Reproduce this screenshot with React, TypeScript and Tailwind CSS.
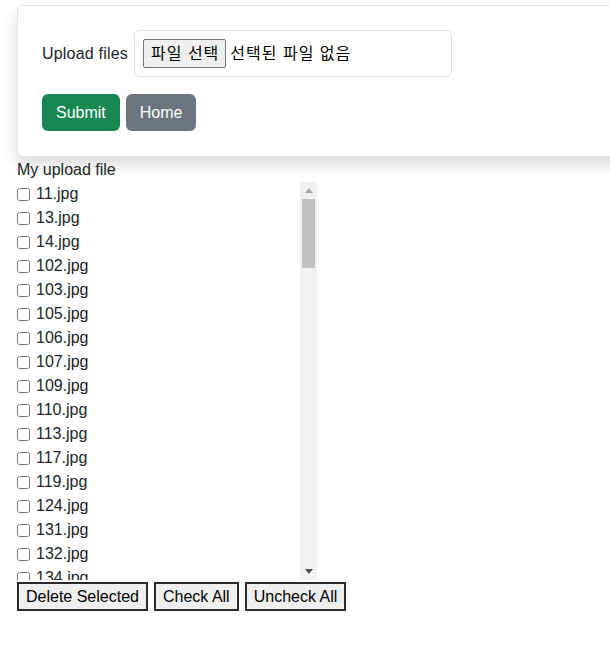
const files = [
  11, 13, 14, 102, 103, 105, 106, 107, 109, 110, 113, 117, 119, 124, 131, 132, 134,
  135, 138, 141, 142, 145, 147, 150, 152, 153, 156, 158, 161, 163, 166, 168, 170,
  171, 174, 176, 179, 181, 183, 186, 188, 190, 192, 195, 197, 199, 201, 204, 206,
].map((n) => `${n}.jpg`);

export default function App() {
  return (
    <div
      className="min-h-screen overflow-hidden bg-white px-[17px] pt-[5px] text-[16px] leading-6 text-[#212529]"
      style={{ fontFamily: '"Liberation Sans", "Noto Sans CJK KR", sans-serif' }}
    >
      <div className="w-[640px] rounded-md border border-[#e5e5e5] bg-white px-6 pt-6 pb-[25px] shadow-[0_8px_16px_rgba(0,0,0,0.15)]">
        <div className="flex items-center gap-[6px]">
          <label className="tracking-[0.2px]">Upload files</label>
          <div className="flex h-[47px] w-[318px] items-center rounded-md border border-[#dee2e6] px-[8px]">
            <span className="rounded-[2px] border border-[#767676] bg-[#efefef] pl-[7px] pr-[6px] leading-[27px] tracking-[1px] text-black">
              파일 선택
            </span>
            <span className="ml-[4px] tracking-[1px] text-black">선택된 파일 없음</span>
          </div>
        </div>
        <div className="mt-[17px] flex gap-[6px]">
          <button className="h-[37px] rounded-md bg-[#198754] px-[14px] text-white">Submit</button>
          <button className="h-[37px] rounded-md bg-[#6c757d] px-[14px] text-white">Home</button>
        </div>
      </div>

      <div className="mt-[1px]">My upload file</div>
      <div className="flex h-[398px] w-[300px]">
        <div className="flex-1 overflow-hidden">
          {files.map((f) => (
            <div key={f} className="flex h-6 items-center">
              <input type="checkbox" className="m-0 mr-[6px] h-[13px] w-[13px]" />
              <span>{f}</span>
            </div>
          ))}
        </div>
        <div className="flex w-[17px] flex-col bg-[#f1f1f1]">
          <div className="flex h-[17px] items-center justify-center">
            <svg width="8" height="5" viewBox="0 0 8 5">
              <path d="M0 5 L4 0 L8 5 Z" fill="#a3a3a3" />
            </svg>
          </div>
          <div className="mx-[2px] h-[69px] bg-[#c1c1c1]" />
          <div className="flex-1" />
          <div className="flex h-[17px] items-center justify-center">
            <svg width="8" height="5" viewBox="0 0 8 5">
              <path d="M0 0 L8 0 L4 5 Z" fill="#505050" />
            </svg>
          </div>
        </div>
      </div>
      <div className="mt-[2px] flex gap-[6px]">
        {["Delete Selected", "Check All", "Uncheck All"].map((t) => (
          <button
            key={t}
            className="h-[29px] border-2 border-[#2b2b2b] bg-[#efefef] px-[7px] text-black"
          >
            {t}
          </button>
        ))}
      </div>
    </div>
  );
}
